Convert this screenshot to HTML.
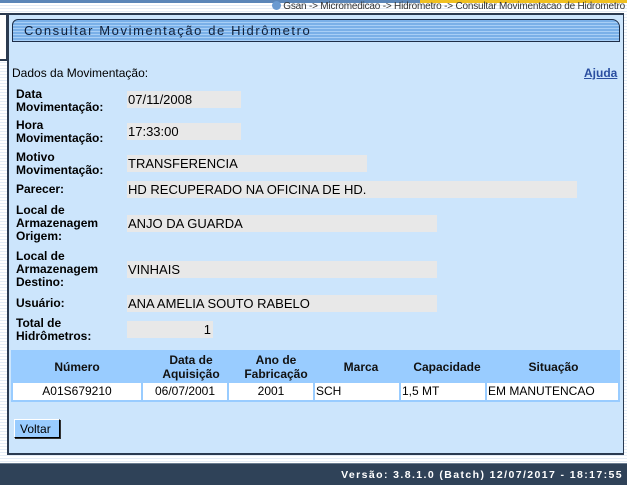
<!DOCTYPE html>
<html><head><meta charset="utf-8"><style>
*{margin:0;padding:0;box-sizing:border-box}
body{width:627px;height:485px;overflow:hidden;position:relative;font-family:"Liberation Sans",Arial,sans-serif;font-size:12px;color:#000;
background:repeating-linear-gradient(#fff 0,#fff 2px,#e4ecf6 2px,#e4ecf6 3px);}
.topline{position:absolute;left:0;top:0;width:627px;height:3px;background:linear-gradient(90deg,#5b86b8 0,#5b86b8 420px,#f0c020 420px,#f0c020 627px)}
.crumb{position:absolute;right:2px;top:1px;font-size:10px;color:#333;letter-spacing:-0.2px}
.crumb b{display:inline-block;width:9px;height:9px;border-radius:50%;background:#6a9ad0;vertical-align:-1px;margin-right:2px}
.leftbox{position:absolute;left:0;top:13px;width:8px;height:48px;border:2px solid #2a3a50;border-left:none;background:#fff}
.panel{position:absolute;left:7px;top:13px;width:617px;height:442px;background:#cce5fc;border:2px solid #2a3a50;border-right:1px solid #2a3a50}
.title{position:absolute;left:12px;top:19px;width:608px;height:23px;border:1px solid #1e2e48;border-radius:6px 8px 0 0;
background:repeating-linear-gradient(#7ab0e8 0,#7ab0e8 2px,#a8cff6 2px,#a8cff6 3px);font-size:13px;letter-spacing:1.6px;padding:3px 0 0 11px;color:#10203a}
.t{position:absolute;font-size:12px}
.l{position:absolute;left:16px;font-weight:bold;line-height:13px;font-size:12px}
.f{position:absolute;left:127px;height:17px;background:#e8e8e8;font-size:13px;padding:1px 0 0 1px}
.tbl{position:absolute;left:11px;top:350px;width:609px;height:52px;background:#99ccff}
.th{position:absolute;top:0;font-weight:bold;text-align:center;line-height:14px;font-size:12px;color:#111}
.td{position:absolute;top:33px;height:17px;background:#fff;font-size:12px;padding-top:1px}
.btn{position:absolute;left:14px;top:419px;width:46px;height:19px;background:#99ccff;border:1px solid #000;border-top-color:#fff;border-left-color:#fff;box-shadow:1px 1px 0 #333;font-size:12px;padding:2px 0 0 5px}
.foot{position:absolute;left:0;top:463px;width:627px;height:22px;background:#2f4258;color:#fff;font-size:10.5px;font-weight:bold;letter-spacing:1.4px;text-align:right;padding:5px 4px 0 0;border-top:1px solid #6a7c90}
</style></head><body>
<div class="topline"></div>
<div class="crumb"><b></b>Gsan -&gt; Micromedicao -&gt; Hidrometro -&gt; Consultar Movimentacao de Hidrometro</div>
<div class="leftbox"></div>
<div class="panel"></div>
<div class="title">Consultar Movimentação de Hidrômetro</div>
<div class="t" style="left:12px;top:66px">Dados da Movimentação:</div>
<div class="t" style="left:584px;top:66px;color:#2a4ea0;text-decoration:underline;font-weight:bold">Ajuda</div>

<div class="l" style="top:88px">Data<br>Movimentação:</div>
<div class="f" style="top:91px;width:114px">07/11/2008</div>
<div class="l" style="top:119px">Hora<br>Movimentação:</div>
<div class="f" style="top:123px;width:114px">17:33:00</div>
<div class="l" style="top:151px">Motivo<br>Movimentação:</div>
<div class="f" style="top:155px;width:240px">TRANSFERENCIA</div>
<div class="l" style="top:183px">Parecer:</div>
<div class="f" style="top:181px;width:450px">HD RECUPERADO NA OFICINA DE HD.</div>
<div class="l" style="top:204px">Local de<br>Armazenagem<br>Origem:</div>
<div class="f" style="top:215px;width:310px">ANJO DA GUARDA</div>
<div class="l" style="top:250px">Local de<br>Armazenagem<br>Destino:</div>
<div class="f" style="top:261px;width:310px">VINHAIS</div>
<div class="l" style="top:297px">Usuário:</div>
<div class="f" style="top:295px;width:310px">ANA AMELIA SOUTO RABELO</div>
<div class="l" style="top:317px">Total de<br>Hidrômetros:</div>
<div class="f" style="top:321px;width:86px;text-align:right;padding-right:2px">1</div>

<div class="tbl">
<div class="th" style="left:0;width:132px;top:10px">Número</div>
<div class="th" style="left:132px;width:96px;top:3px">Data de<br>Aquisição</div>
<div class="th" style="left:228px;width:74px;top:3px">Ano de<br>Fabricação</div>
<div class="th" style="left:302px;width:96px;top:10px">Marca</div>
<div class="th" style="left:388px;width:96px;top:10px">Capacidade</div>
<div class="th" style="left:476px;width:133px;top:10px">Situação</div>
<div class="td" style="left:2px;width:128px;text-align:center">A01S679210</div>
<div class="td" style="left:132px;width:84px;text-align:center">06/07/2001</div>
<div class="td" style="left:218px;width:84px;text-align:center">2001</div>
<div class="td" style="left:304px;width:84px;padding-left:1px">SCH</div>
<div class="td" style="left:390px;width:84px;padding-left:1px">1,5 MT</div>
<div class="td" style="left:476px;width:131px;padding-left:1px">EM MANUTENCAO</div>
</div>
<div class="btn">Voltar</div>
<div class="foot">Versão: 3.8.1.0 (Batch) 12/07/2017 - 18:17:55</div>
</body></html>
